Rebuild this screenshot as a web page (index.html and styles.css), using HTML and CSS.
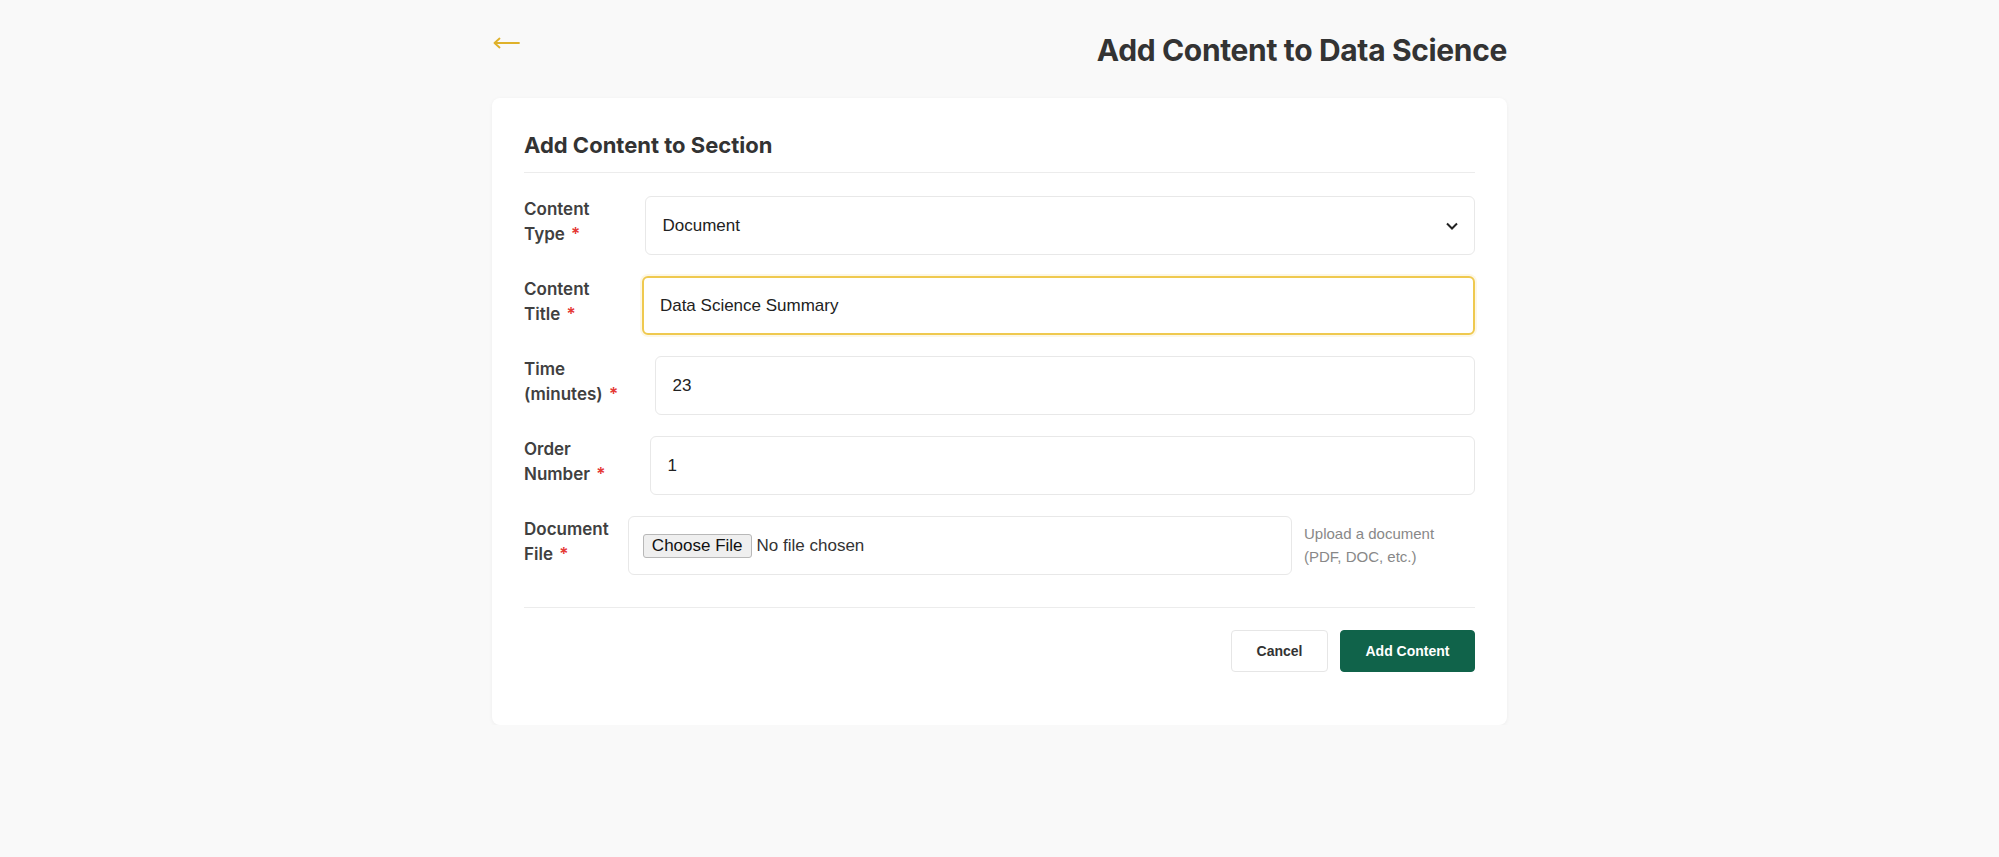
FILE: index.html
```html
<!DOCTYPE html>
<html lang="en">
<head>
<meta charset="utf-8">
<title>Add Content to Data Science</title>
<link rel="stylesheet" href="styles.css">
</head>
<body>
<div class="page">
  <header class="page-header">
    <button class="back-btn" type="button" aria-label="Back">
      <svg width="28" height="14" viewBox="0 0 28 14" aria-hidden="true">
        <path d="M27 7H2.5M7.5 2.5L2.5 7l5 4.5" fill="none" stroke="#dfb12a" stroke-width="1.8" stroke-linecap="round" stroke-linejoin="round"/>
      </svg>
    </button>
    <h1 class="page-title">Add Content to Data Science</h1>
  </header>

  <main class="card">
    <h2 class="card-title">Add Content to Section</h2>
    <form class="form">
      <div class="form-row">
        <label class="form-label"><span class="w">Content</span> <span class="w">Type <span class="req">*</span></span></label>
        <select class="form-control select">
          <option>Document</option>
          <option>Video</option>
          <option>Quiz</option>
        </select>
      </div>
      <div class="form-row">
        <label class="form-label"><span class="w">Content</span> <span class="w">Title <span class="req">*</span></span></label>
        <input class="form-control focused" type="text" value="Data Science Summary">
      </div>
      <div class="form-row">
        <label class="form-label"><span class="w">Time</span> <span class="w">(minutes) <span class="req">*</span></span></label>
        <input class="form-control" type="number" value="23">
      </div>
      <div class="form-row">
        <label class="form-label"><span class="w">Order</span> <span class="w">Number <span class="req">*</span></span></label>
        <input class="form-control" type="number" value="1">
      </div>
      <div class="form-row">
        <label class="form-label"><span class="w">Document</span> <span class="w">File <span class="req">*</span></span></label>
        <input class="form-control file" type="file">
        <p class="help">Upload a document (PDF, DOC, etc.)</p>
      </div>
      <div class="actions">
        <button type="button" class="btn btn-cancel">Cancel</button>
        <button type="button" class="btn btn-primary">Add Content</button>
      </div>
    </form>
  </main>
</div>
</body>
</html>
```

FILE: styles.css
```css
* { box-sizing: border-box; }

html, body {
  margin: 0;
  padding: 0;
  background: #f9f9f9;
  font-family: Inter, "Liberation Sans", Arial, sans-serif;
  color: #333;
}

.page {
  width: 1015px;
  margin: 0 auto;
  padding-top: 24px;
}

.page-header {
  display: flex;
  justify-content: space-between;
  align-items: flex-start;
  margin-bottom: 30px;
}

.back-btn {
  background: none;
  border: none;
  padding: 0;
  margin-top: 12px;
  line-height: 0;
  cursor: pointer;
}

.page-title {
  margin: 8px 0 0;
  font-size: 30px;
  line-height: 36px;
  font-weight: 700;
  color: #333;
  letter-spacing: -0.35px;
}

.card {
  background: #fff;
  border-radius: 8px;
  box-shadow: 0 1px 4px rgba(0, 0, 0, 0.05);
  padding: 32px 32px 53px;
}

.card-title {
  margin: 0;
  font-size: 22px;
  line-height: 31px;
  font-weight: 700;
  color: #333;
  padding-bottom: 11px;
  border-bottom: 1px solid #ececec;
}

.form {
  padding-top: 23px;
}

.form-row {
  display: flex;
  align-items: flex-start;
  gap: 12px;
  margin-bottom: 21px;
}

.form-label {
  font-size: 17px;
  line-height: 25px;
  font-weight: 600;
  color: #404040;
  padding-top: 1px;
}

.w {
  white-space: nowrap;
}

.req {
  color: #e53935;
  margin-left: 2px;
}

.form-control {
  width: 100%;
  height: 59px;
  border: 1px solid #e8e8e8;
  border-radius: 6px;
  background: #fff;
  padding: 0 16px;
  font-family: "Liberation Sans", Arial, sans-serif;
  font-size: 17px;
  color: #222;
  outline: none;
}

.form-control[type=number] {
  -moz-appearance: textfield;
}
.form-control[type=number]::-webkit-inner-spin-button,
.form-control[type=number]::-webkit-outer-spin-button {
  -webkit-appearance: none;
  margin: 0;
}

.select {
  appearance: none;
  -webkit-appearance: none;
  background-image: url("data:image/svg+xml,%3Csvg xmlns='http://www.w3.org/2000/svg' width='14' height='10' viewBox='0 0 14 10'%3E%3Cpath d='M2 2.5l5 5 5-5' fill='none' stroke='%23222' stroke-width='2'/%3E%3C/svg%3E");
  background-repeat: no-repeat;
  background-position: right 15px center;
  background-size: 14px 10px;
}

.focused {
  border: 2px solid #efc94f;
  box-shadow: 0 0 0 2px rgba(239, 201, 79, 0.15);
  padding-left: 16px;
}

.file {
  padding: 0 14px;
  display: flex;
  align-items: center;
  line-height: 57px;
  color: #333;
}

.file::file-selector-button {
  font-family: "Liberation Sans", Arial, sans-serif;
  font-size: 17px;
  padding: 1px 8px;
  margin-right: 5px;
  border: 1px solid #b8b8b8;
  border-radius: 3px;
  background: #efefef;
  color: #111;
}

.help {
  margin: 6px 0 0;
  font-family: "Liberation Sans", Arial, sans-serif;
  font-size: 15px;
  line-height: 23px;
  color: #888;
  flex: 0 0 auto;
  width: 171px;
}

.actions {
  display: flex;
  justify-content: flex-end;
  gap: 12px;
  border-top: 1px solid #ececec;
  margin-top: 32px;
  padding-top: 22px;
}

.btn {
  height: 42px;
  padding: 0 24px;
  border-radius: 4px;
  font-family: "Liberation Sans", Arial, sans-serif;
  font-size: 14px;
  font-weight: 700;
  cursor: pointer;
}

.btn-cancel {
  background: #fff;
  border: 1px solid #e6e6e6;
  color: #333;
  width: 97px;
}

.btn-primary {
  background: #10634a;
  border: 1px solid #10634a;
  color: #fff;
  width: 135px;
}
```
